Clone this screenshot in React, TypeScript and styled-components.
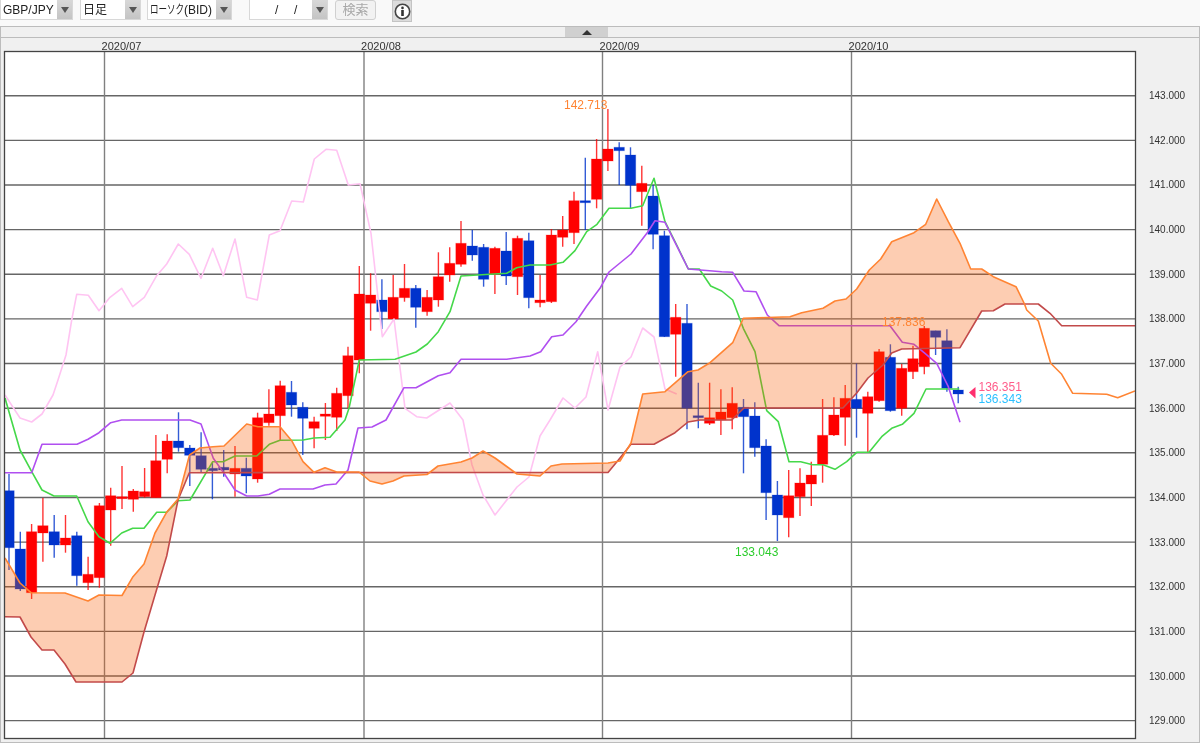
import styled, { createGlobalStyle } from 'styled-components';

const GlobalStyle = createGlobalStyle`
    html, body {
        margin: 0;
        padding: 0;
        background: #f9f9f9;
        overflow: hidden;
        font-family: "Liberation Sans", "Noto Sans CJK JP", sans-serif;
    }
`;

type Candle = [number, number, number, number, 'r' | 'b'];
type Pt = [number, number];

// wick top, body top, body bottom, wick bottom (page pixels)
const candles: Candle[] = [
    [474, 490.7, 547.7, 570, 'b'], [531.7, 549, 589, 591, 'b'], [524, 531.7, 592.7, 599, 'r'], [498, 525.7, 533, 561.7, 'r'],
    [515, 531.7, 545, 557.7, 'b'], [515, 538, 545, 552.7, 'r'], [531.7, 535.7, 575.7, 585.7, 'b'], [556.7, 574.3, 582.7, 590, 'r'],
    [503, 505.7, 577.7, 587.7, 'r'], [487.7, 495.7, 510, 545.7, 'r'], [466, 496.7, 498.3, 509, 'r'], [489, 491, 499.3, 511.7, 'r'],
    [468, 491.7, 496.7, 497.7, 'r'], [435, 460.7, 497.7, 497.7, 'r'], [434.3, 441, 459.3, 473.3, 'r'], [412.3, 441, 447.7, 451.7, 'b'],
    [445, 448, 455.3, 486, 'b'], [432.3, 455.7, 469.3, 472.7, 'b'], [463, 468.3, 470.7, 499.3, 'b'], [450, 467.3, 470, 476.7, 'b'],
    [446, 468.3, 474, 496.7, 'r'], [457.7, 468.3, 476, 493.3, 'b'], [412.7, 417.7, 479, 482.7, 'r'], [389.3, 414, 422.7, 425.7, 'r'],
    [380.7, 385.7, 415.7, 440, 'r'], [381, 392.3, 405, 416.7, 'b'], [402.3, 407.3, 418.3, 455, 'b'], [416.7, 421.7, 428.3, 448.3, 'r'],
    [403, 414, 416.3, 440, 'r'], [387.7, 393.3, 417.3, 431, 'r'], [346.7, 355.7, 395.7, 408.3, 'r'], [266, 294, 360, 373.3, 'r'],
    [273.3, 295, 303.3, 330.7, 'r'], [279.3, 300, 311.7, 329, 'b'], [275, 297.3, 319, 319, 'r'], [264, 288.3, 297.7, 301.7, 'r'],
    [285, 288.3, 307.3, 327.7, 'b'], [290, 297.3, 311.7, 315.7, 'r'], [252.3, 276.7, 300, 306.7, 'r'], [247.3, 263.3, 275, 281.7, 'r'],
    [221, 243.3, 264.3, 266.7, 'r'], [230, 246, 255, 260.7, 'b'], [244, 247.3, 279.3, 286.7, 'b'], [246.7, 248.3, 274.3, 294, 'r'],
    [232, 251, 276, 285, 'b'], [235.7, 238.3, 276.7, 295, 'r'], [232.7, 240.7, 297.7, 308.3, 'b'], [275, 300, 302.7, 307.3, 'r'],
    [229, 235, 301.7, 303, 'r'], [216, 230, 237.3, 246.7, 'r'], [191.7, 200.7, 232.7, 244, 'r'], [157.7, 200.7, 202.7, 230, 'b'],
    [139, 159, 199.3, 208.3, 'r'], [109, 149, 161, 171, 'r'], [142.3, 147.3, 150.7, 185, 'b'], [147.3, 155, 185.3, 209, 'b'],
    [165.7, 183.3, 191.7, 225.7, 'r'], [185, 196, 234.3, 249.3, 'b'], [230.7, 235.7, 336.7, 337, 'b'], [304, 317.3, 334.3, 376.7, 'r'],
    [304, 323.3, 408.3, 429.3, 'b'], [382.7, 415.7, 417.7, 428.3, 'b'], [382.7, 417.7, 423.3, 425, 'r'], [389.3, 412, 420, 435, 'r'],
    [387.3, 403.3, 417.7, 429.3, 'r'], [399, 407.3, 416.7, 473.3, 'b'], [402.3, 416, 447.7, 456.7, 'b'], [439.3, 446, 492.7, 520, 'b'],
    [481, 495, 515, 541, 'b'], [470, 495.7, 517.7, 537.3, 'r'], [468.3, 483, 496.7, 516, 'r'], [461.7, 475, 484, 506, 'r'],
    [399, 435.3, 464.3, 482.7, 'r'], [397.3, 415, 435, 436, 'r'], [385, 398.3, 417.3, 445.7, 'r'], [363.3, 399.3, 408.3, 437.7, 'b'],
    [391.7, 396.7, 413.3, 452.7, 'r'], [349, 351.7, 400.7, 401.7, 'r'], [344.3, 357.3, 410.7, 411.7, 'b'], [364, 368.3, 408.3, 415.7, 'r'],
    [345.7, 358.7, 371.7, 379, 'r'], [326, 328.3, 366.7, 374.3, 'r'], [330.7, 330.7, 337.3, 355, 'b'], [329.3, 340.7, 388.3, 391.7, 'b'],
    [386.7, 390, 394, 403.3, 'b'],
];

const spanA: Pt[] = [
    [5, 558], [20, 583], [31, 592.7], [65, 593], [88, 601], [99, 595], [122, 595.5], [133, 576.7], [144, 564], [155, 533], [167, 511.7],
    [178, 499], [189.5, 455], [200, 448], [213, 446.7], [224, 446], [246.7, 424], [258, 426.7], [280, 426.7], [291.7, 440.7], [303, 461.7],
    [314, 472.3], [325, 467.7], [336.7, 472], [359, 472], [370, 481], [382, 484], [393, 481], [404, 476], [427, 474.5], [438, 466], [461, 462],
    [472, 458], [483, 451], [495, 458], [506, 466], [517, 474], [540, 476], [551, 466], [562, 464], [608, 463], [620, 461], [631, 443],
    [642.7, 394], [665, 391.7], [688, 371.7], [698, 370], [710, 362.7], [732.7, 342.7], [743.3, 318.3], [790, 316.7], [801.7, 312.7],
    [823, 308.3], [835, 301], [846, 299], [856.7, 289], [869.3, 270], [880.7, 259], [891.7, 241.7], [914, 232.7], [925.7, 224.3], [936.7, 199],
    [948.3, 221.7], [960, 243.3], [970.7, 269], [981.7, 269], [993.3, 276.7], [1016, 286.7], [1024.5, 304],
];
const spanATail: Pt[] = [[1026.7, 310], [1038.3, 321], [1050.7, 363.3], [1061.7, 374.3], [1072.7, 393.3], [1106.7, 394.3], [1117.7, 397.7], [1135, 391]];

const spanB: Pt[] = [
    [5, 616.7], [20, 617], [31, 637], [42, 650], [54, 650], [65, 664], [76, 682], [122, 682], [133, 673], [144, 632], [155, 595], [166.7, 556],
    [178, 500], [189.3, 472.7], [608, 472.5], [620, 458], [631, 444.3], [654, 444.3], [675, 432.7], [688, 422], [700, 420], [731.7, 420],
    [744, 408], [843, 408], [856.7, 393], [868, 378], [883, 365], [891.7, 353], [901.7, 349], [960, 347.7], [981.7, 311], [993.3, 310.7], [1005, 304],
];
const spanBTail: Pt[] = [[1038.3, 304], [1050, 313.3], [1061.7, 325.7], [1135, 325.7]];

const tenkan: Pt[] = [
    [5, 398], [20, 450], [31.7, 471.7], [42, 490], [54, 496], [76.7, 496], [88, 521.7], [99, 536.7], [110, 543.3], [121.7, 533], [132.7, 528.3],
    [144, 528.3], [156.7, 512.3], [166.7, 512.3], [178, 500.7], [190, 500], [212.7, 461.7], [223, 461.7], [235, 456], [256.7, 456], [269.3, 444.3],
    [280, 440.3], [303, 440], [314, 438], [330, 437.3], [345, 420], [349, 408.3], [359.3, 360], [395, 359.3], [416, 352], [427.3, 344],
    [438.3, 331.7], [450, 311.7], [461, 276], [506.7, 273.3], [516.7, 267.7], [530, 265], [550, 265], [563, 262.3], [575, 250.7], [586.7, 231.7],
    [597, 224.3], [609, 208.3], [631, 208.3], [642.7, 205.7], [654, 178.3], [665, 221.7], [676.7, 245], [688.3, 269], [699.3, 269], [710.7, 286],
    [721.7, 291], [732.7, 300], [743.3, 328.3], [755, 351.7], [766.7, 410.7], [778.3, 421.7], [789, 461.7], [800.7, 461.7], [812.7, 464.7],
    [823, 464.7], [835, 469.3], [846.7, 461.7], [856.7, 452.3], [869, 452.3], [881.7, 436.7], [891.7, 428.3], [902.3, 424.3], [914, 413.3],
    [926, 389], [959.3, 389],
];

const kijun: Pt[] = [
    [5, 472.7], [31.7, 472.7], [42, 444.3], [77, 444.3], [88, 439.3], [99, 432.7], [110.7, 422.7], [121.7, 420], [190, 420], [201, 424],
    [213.3, 458.3], [224, 473.3], [235, 490], [246.7, 496], [258, 496], [269.3, 494.3], [280, 489], [313, 489], [325, 485], [336, 484],
    [348, 470], [358, 428], [372, 427], [386, 420], [404, 387.7], [416, 387.7], [438.3, 375.7], [450, 372.7], [461, 359.3], [506.7, 359.3],
    [530, 356], [540.7, 351.7], [551.7, 336.7], [563, 335], [576, 321.7], [586.7, 306], [600, 288.3], [609, 272], [631, 254], [648, 231.7],
    [655, 220.7], [665, 222.3], [688.3, 269], [721.7, 271.7], [732.7, 272.3], [744, 291], [756, 291.7], [767.3, 315], [779, 325.7], [890, 325.7],
    [902.3, 342.3], [914, 344.3], [925, 353.3], [936.7, 363.3], [948.3, 386.7], [960, 422.3],
];

const chikou: Pt[] = [
    [5, 395], [20, 418], [31.7, 422], [42, 414], [53, 395], [58, 380], [66, 355], [71.7, 320], [76.7, 294.3], [88.3, 295.3], [99, 310.7],
    [110, 297.3], [121.7, 288.3], [132.7, 306.7], [144.3, 297.3], [156.7, 275.7], [166.7, 264], [178.3, 244], [189.3, 254.3], [201, 278.3],
    [212.7, 248.3], [223.3, 275.7], [235, 239], [246.7, 297.3], [257.3, 300], [269.3, 235], [280, 230.7], [291.7, 201], [303.3, 202], [314.3, 159],
    [326, 149.3], [336.7, 150.3], [348.3, 185], [360, 183.7], [371, 233.3], [382.3, 336.7], [394, 319], [405, 408.3], [416.7, 416.7], [426.7, 418],
    [450, 403], [463, 420], [472, 465], [483, 495], [495, 515], [517, 487], [529, 477], [540, 436], [550, 420], [563, 398], [575, 408], [586, 397],
    [597.7, 351.7], [608, 410], [620, 367], [631, 357], [642.7, 328], [654, 337], [665, 389], [676.7, 394],
];

const priceLevels = [143, 142, 141, 140, 139, 138, 137, 136, 135, 134, 133, 132, 131, 130, 129];
const months = [
    { x: 104.5, label: '2020/07' },
    { x: 364, label: '2020/08' },
    { x: 602.5, label: '2020/09' },
    { x: 851.5, label: '2020/10' },
];

const priceY = (p: number) => 95.7 + (143 - p) * 44.64;
const toPoints = (pts: Pt[]) => pts.map((p) => p.join(',')).join(' ');

const Chart = () => {
    const cloud = [...spanA, ...[...spanB].reverse()];
    return (
        <ChartSvg viewBox="1 38 1198 704" width={1198} height={704}>
            <defs>
                <clipPath id="plot">
                    <rect x={5} y={52} width={1130} height={686} />
                </clipPath>
            </defs>
            <rect x={4.5} y={51.5} width={1131} height={687} fill="#fff" />
            {months.map((m) => (
                <text key={m.label} x={m.x + 17} y={50} fontSize={11} fill="#333" textAnchor="middle" fontFamily="Liberation Sans, sans-serif">
                    {m.label}
                </text>
            ))}
            {priceLevels.map((p) => (
                <text key={p} x={1149} y={priceY(p) + 3.5} fontSize={10} fill="#333" fontFamily="Liberation Sans, sans-serif">
                    {p.toFixed(3)}
                </text>
            ))}
            <g clipPath="url(#plot)">
                {priceLevels.map((p) => (
                    <line key={p} x1={5} x2={1135} y1={priceY(p)} y2={priceY(p)} stroke="#666" strokeWidth={1.4} />
                ))}
                {months.map((m) => (
                    <line key={m.label} x1={m.x} x2={m.x} y1={52} y2={738} stroke="#808080" strokeWidth={1.4} />
                ))}
                {candles.map(([hi, top, bot, lo, kind], i) => {
                    const x = 9 + 11.3 * i;
                    const color = kind === 'r' ? '#ff0000' : '#0033cc';
                    return (
                        <g key={i}>
                            <line x1={x} x2={x} y1={hi} y2={lo} stroke={color} strokeWidth={1.4} strokeOpacity={0.8} />
                            <rect x={x - 5.2} y={top} width={10.4} height={Math.max(bot - top, 2)} fill={color} stroke={color} strokeOpacity={0.25} strokeWidth={1} />
                        </g>
                    );
                })}
                <Line points={toPoints(chikou)} stroke="#ffc4f2" />
                <Line points={toPoints(tenkan)} stroke="#45d84a" />
                <Line points={toPoints(kijun)} stroke="#b04ff0" />
                <polygon points={toPoints(cloud)} fill="rgb(248,88,0)" fillOpacity={0.3} />
                <Line points={toPoints([...spanB, ...spanBTail])} stroke="#c24a4a" />
                <Line points={toPoints([...spanA, ...spanATail])} stroke="#ff8433" />
            </g>
            <rect x={4.5} y={51.5} width={1131} height={687} fill="none" stroke="#444" strokeWidth={1.3} />
            <ChartLabel x={564} y={109} fill="#ff8433">142.713</ChartLabel>
            <ChartLabel x={735} y={556} fill="#2ccc2c">133.043</ChartLabel>
            <ChartLabel x={882} y={326} fill="#ff8433">137.836</ChartLabel>
            <polygon points="969,392.5 975.5,387 975.5,398.5" fill="#ff2f6e" />
            <ChartLabel x={978.5} y={391} fill="#ff5c8a">136.351</ChartLabel>
            <ChartLabel x={978.5} y={403} fill="#2cc0ff">136.343</ChartLabel>
        </ChartSvg>
    );
};

const Select = ({ width, gap, children }: { width: number; gap: number; children?: React.ReactNode }) => (
    <SelectBox $width={width} $gap={gap}>
        <SelectValue>{children}</SelectValue>
        <ArrowButton />
    </SelectBox>
);

const App = () => (
    <>
        <GlobalStyle />
        <Page>
            <Toolbar>
                <Select width={73} gap={0}>GBP/JPY</Select>
                <Select width={61} gap={7}>日足</Select>
                <Select width={85} gap={6}>
                    <Kana>ローソク</Kana>(BID)
                </Select>
                <Select width={79} gap={17}>
                    <DateSlashes>/ /</DateSlashes>
                </Select>
                <SearchButton>検索</SearchButton>
                <InfoButton>
                    <svg width={17} height={17} viewBox="0 0 17 17">
                        <circle cx={8.5} cy={8.5} r={7.2} fill="#fff" stroke="#444" strokeWidth={1.6} />
                        <circle cx={8.5} cy={4.9} r={1.3} fill="#333" />
                        <rect x={7.2} y={7} width={2.6} height={6} fill="#333" />
                    </svg>
                </InfoButton>
            </Toolbar>
            <Panel>
                <HandleBar>
                    <Handle />
                </HandleBar>
                <Chart />
            </Panel>
        </Page>
    </>
);

const Page = styled.div`
    width: 1200px;
    height: 743px;
    display: flex;
    flex-direction: column;
    filter: blur(0.4px);
`;

const Toolbar = styled.div`
    height: 26px;
    flex: none;
    display: flex;
    align-items: flex-start;
    background: #f9f9f9;
`;

const SelectBox = styled.div<{ $width: number; $gap: number }>`
    width: ${(p) => p.$width}px;
    margin-left: ${(p) => p.$gap}px;
    height: 20px;
    box-sizing: border-box;
    display: flex;
    background: #fff;
    border: 1px solid #d8d8d8;
    border-top: none;
`;

const SelectValue = styled.div`
    flex: 1;
    padding-left: 2px;
    font-size: 12px;
    line-height: 20px;
    color: #222;
    white-space: nowrap;
    overflow: hidden;
`;

const Kana = styled.span`
    display: inline-block;
    width: 34px;
    transform: scaleX(0.71);
    transform-origin: left center;
    white-space: nowrap;
`;

const DateSlashes = styled.span`
    margin-left: 23px;
    word-spacing: 12.4px;
`;

const ArrowButton = styled.div`
    width: 15px;
    flex: none;
    display: flex;
    align-items: center;
    justify-content: center;
    background: linear-gradient(#d8d8d8, #c4c4c4);
    &::after {
        content: '';
        border-left: 4px solid transparent;
        border-right: 4px solid transparent;
        border-top: 6px solid #555;
    }
`;

const SearchButton = styled.div`
    width: 41px;
    height: 20px;
    margin: 0 0 0 7px;
    box-sizing: border-box;
    text-align: center;
    font-size: 13px;
    line-height: 18px;
    color: #a8a8a8;
    background: #f2f2f2;
    border: 1px solid #d0d0d0;
    border-radius: 3px;
`;

const InfoButton = styled.div`
    width: 20px;
    height: 22px;
    margin-left: 16px;
    display: flex;
    align-items: center;
    justify-content: center;
    background: #dcdcdc;
    border: 1px solid #c4c4c4;
    box-sizing: border-box;
`;

const Panel = styled.div`
    flex: 1;
    display: flex;
    flex-direction: column;
    background: #f0f0f0;
    border: 1px solid #bcbcbc;
    box-sizing: border-box;
`;

const HandleBar = styled.div`
    height: 11px;
    flex: none;
    box-sizing: border-box;
    display: flex;
    justify-content: center;
    background: #f0f0f0;
    border-bottom: 1px solid #bcbcbc;
`;

const Handle = styled.div`
    width: 43px;
    height: 10px;
    margin-left: -27px;
    display: flex;
    align-items: center;
    justify-content: center;
    background: #d0d0d0;
    &::after {
        content: '';
        border-left: 5px solid transparent;
        border-right: 5px solid transparent;
        border-bottom: 5px solid #333;
    }
`;

const ChartSvg = styled.svg`
    display: block;
    flex: none;
`;

const Line = styled.polyline`
    fill: none;
    stroke-width: 1.6;
    stroke-linejoin: round;
`;

const ChartLabel = styled.text`
    font-family: "Liberation Sans", sans-serif;
    font-size: 12px;
`;

export default App;
